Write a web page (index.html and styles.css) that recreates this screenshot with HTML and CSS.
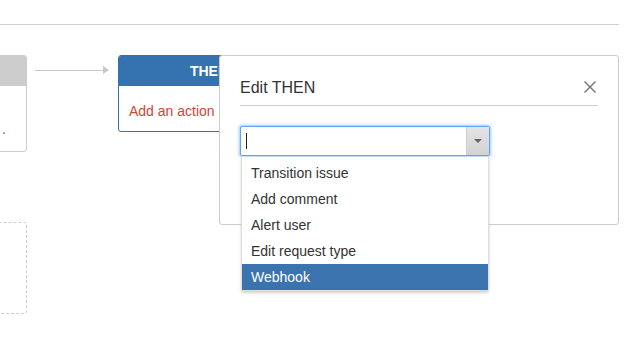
FILE: index.html
```html
<!DOCTYPE html>
<html>
<head>
<meta charset="utf-8">
<link rel="stylesheet" href="styles.css">
</head>
<body>
<div class="page">
  <div class="topbar"></div>
  <div class="canvas">
    <div class="node node-when">
      <div class="node-head"></div>
      <div class="node-body"><span class="dot">.</span></div>
    </div>
    <div class="connector">
      <span class="connector-line"></span>
      <span class="connector-head"></span>
    </div>
    <div class="node node-then">
      <div class="node-head">THEN</div>
      <div class="node-body"><span class="add-action">Add an action</span></div>
    </div>
    <div class="node-placeholder"></div>

    <div class="dialog">
      <div class="dialog-head">
        <h2 class="dialog-title">Edit THEN</h2>
        <svg class="close" width="14" height="14" viewBox="0 0 14 14">
          <path d="M1.5 1.5 L12.5 12.5 M12.5 1.5 L1.5 12.5" stroke="#707070" stroke-width="1.4" fill="none"/>
        </svg>
      </div>
      <div class="select-wrap">
        <div class="select">
          <div class="select-input"><span class="caret"></span></div>
          <div class="select-btn"><span class="tri"></span></div>
        </div>
        <ul class="menu">
          <li class="menu-item">Transition issue</li>
          <li class="menu-item">Add comment</li>
          <li class="menu-item">Alert user</li>
          <li class="menu-item">Edit request type</li>
          <li class="menu-item active">Webhook</li>
        </ul>
      </div>
    </div>
  </div>
</div>
</body>
</html>
```

FILE: styles.css
```css
* { box-sizing: border-box; }
html, body {
  margin: 0;
  padding: 0;
  background: #fff;
  font-family: "Liberation Sans", Arial, sans-serif;
  font-size: 14px;
  color: #333;
}
.page {
  width: 629px;
  height: 343px;
  overflow: hidden;
  position: relative;
}
.topbar {
  height: 25px;
  margin-right: 10px;
  border-bottom: 1px solid #d0d0d0;
}
.canvas {
  position: relative;
  height: 318px;
}
.node {
  position: absolute;
  border: 1px solid #ccc;
  border-radius: 3px;
  background: #fff;
  overflow: hidden;
}
.node-head {
  height: 30px;
  line-height: 30px;
  text-align: center;
  font-weight: bold;
  color: #fff;
}
.node-when {
  left: -80px;
  top: 30px;
  width: 107px;
  height: 97px;
}
.node-when .node-head { background: #ccc; }
.node-when .node-body {
  position: relative;
  height: 65px;
}
.dot {
  position: absolute;
  left: 81px;
  top: 36px;
  color: #4a6a90;
  font-size: 14px;
  line-height: 14px;
}
.connector {
  position: absolute;
  left: 35px;
  top: 41px;
  display: flex;
  align-items: center;
  height: 8px;
}
.connector-line {
  width: 68px;
  height: 1px;
  background: #c8c8c8;
}
.connector-head {
  width: 0;
  height: 0;
  border-top: 4px solid transparent;
  border-bottom: 4px solid transparent;
  border-left: 6px solid #c8c8c8;
}
.node-then {
  left: 118px;
  top: 30px;
  width: 182px;
  height: 77px;
  border-color: #3572b0;
}
.node-then .node-head { background: #3572b0; }
.node-then .node-body {
  padding: 15px 10px 0;
  line-height: 20px;
}
.add-action { color: #d04437; }
.node-placeholder {
  position: absolute;
  left: -80px;
  top: 197px;
  width: 107px;
  height: 92px;
  border: 1px dashed #ccc;
  border-radius: 3px;
}
.dialog {
  position: absolute;
  left: 219px;
  top: 30px;
  width: 400px;
  height: 170px;
  background: #fff;
  border: 1px solid #ccc;
  border-radius: 3px;
  padding: 0 20px;
}
.dialog-head {
  display: flex;
  align-items: center;
  justify-content: space-between;
  padding-top: 22px;
  padding-bottom: 7px;
  border-bottom: 1px solid #ccc;
}
.dialog-title {
  margin: 0;
  font-size: 16px;
  font-weight: normal;
  line-height: 20px;
  color: #333;
}
.close {
  display: block;
  margin-right: 1px;
  margin-top: -2px;
}
.select-wrap {
  position: relative;
  margin-top: 20px;
  width: 250px;
}
.select {
  display: flex;
  height: 30px;
  border: 1px solid #5fa3f2;
  box-shadow: 0 0 3px 1px #9cc8f7;
  border-radius: 2px;
  background: #fff;
}
.select-input {
  flex: 1;
  display: flex;
  align-items: center;
  padding-left: 5px;
}
.caret {
  width: 1px;
  height: 16px;
  background: #222;
}
.select-btn {
  width: 23px;
  display: flex;
  align-items: center;
  justify-content: center;
  background: linear-gradient(#e4e4e4, #d2d2d2);
  border-left: 1px solid #d0d0d0;
}
.tri {
  width: 0;
  height: 0;
  border-left: 4px solid transparent;
  border-right: 4px solid transparent;
  border-top: 4px solid #666;
}
.menu {
  position: absolute;
  left: 1px;
  top: 31px;
  width: 248px;
  margin: 0;
  padding: 3px 0 0;
  list-style: none;
  background: #fff;
  border: 1px solid #ddd;
  border-top: none;
  border-radius: 0 0 3px 3px;
  box-shadow: 0 2px 3px rgba(0,0,0,0.18);
}
.menu-item {
  height: 26px;
  line-height: 26px;
  padding-left: 9px;
  color: #333;
}
.menu-item.active {
  background: #3b73af;
  color: #fff;
}
```
